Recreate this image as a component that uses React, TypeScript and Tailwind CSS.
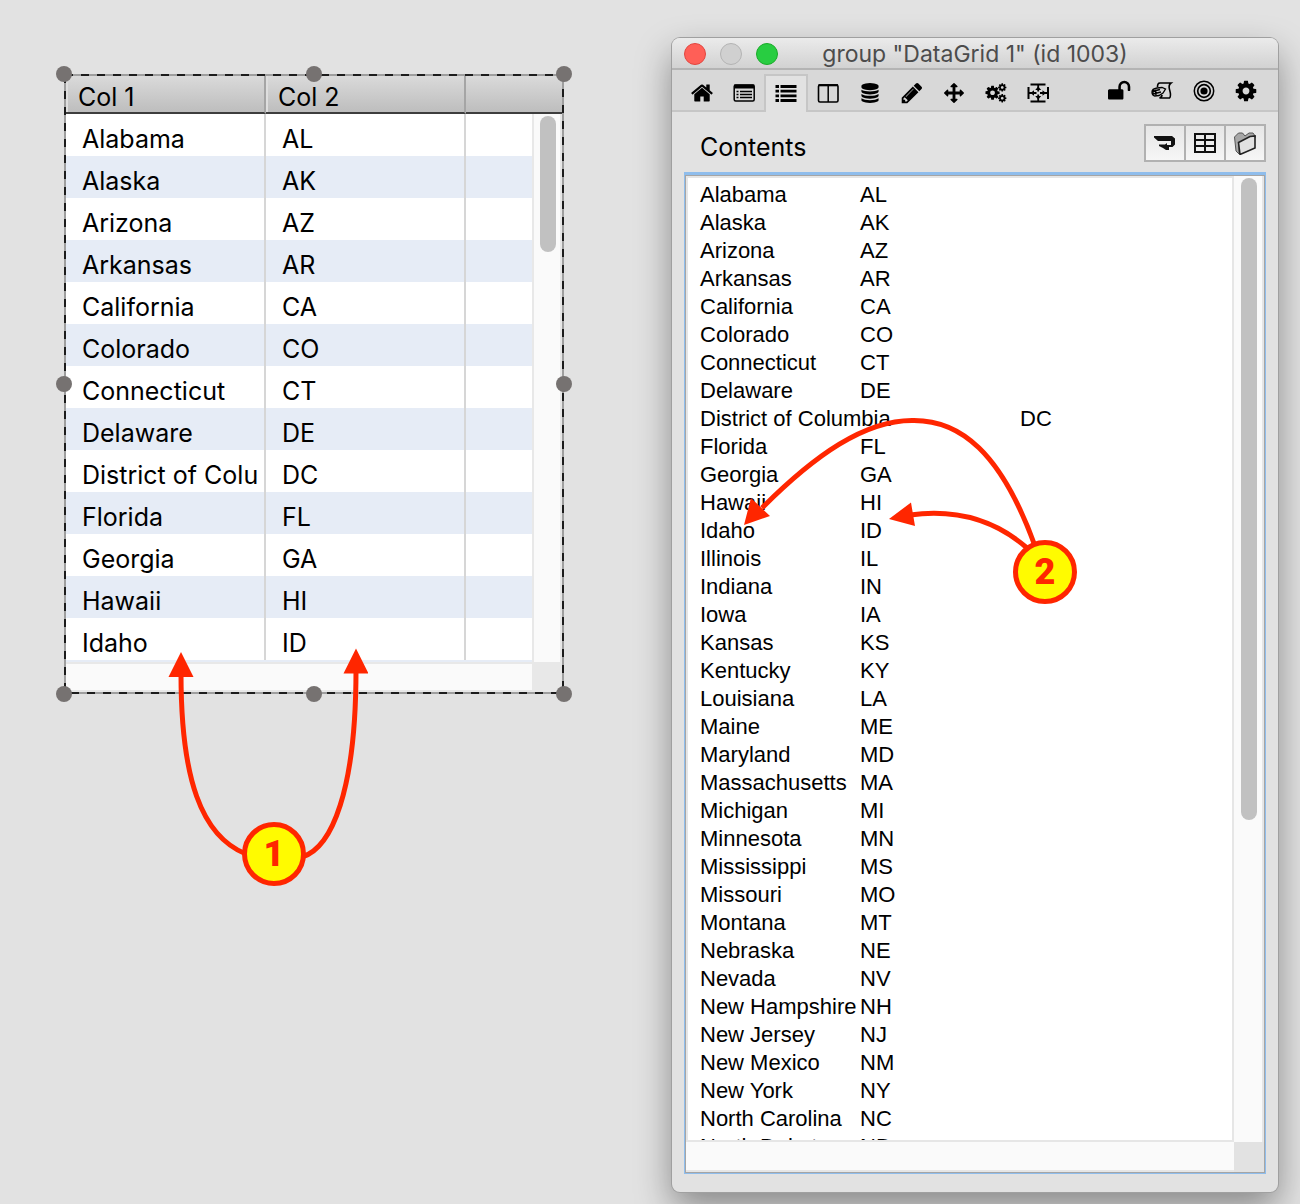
import React from 'react';

const contents: [string, string][] = [
  ['Alabama', 'AL'],
  ['Alaska', 'AK'],
  ['Arizona', 'AZ'],
  ['Arkansas', 'AR'],
  ['California', 'CA'],
  ['Colorado', 'CO'],
  ['Connecticut', 'CT'],
  ['Delaware', 'DE'],
  ['District of Columbia', 'DC'],
  ['Florida', 'FL'],
  ['Georgia', 'GA'],
  ['Hawaii', 'HI'],
  ['Idaho', 'ID'],
  ['Illinois', 'IL'],
  ['Indiana', 'IN'],
  ['Iowa', 'IA'],
  ['Kansas', 'KS'],
  ['Kentucky', 'KY'],
  ['Louisiana', 'LA'],
  ['Maine', 'ME'],
  ['Maryland', 'MD'],
  ['Massachusetts', 'MA'],
  ['Michigan', 'MI'],
  ['Minnesota', 'MN'],
  ['Mississippi', 'MS'],
  ['Missouri', 'MO'],
  ['Montana', 'MT'],
  ['Nebraska', 'NE'],
  ['Nevada', 'NV'],
  ['New Hampshire', 'NH'],
  ['New Jersey', 'NJ'],
  ['New Mexico', 'NM'],
  ['New York', 'NY'],
  ['North Carolina', 'NC'],
  ['North Dakota', 'ND'],
];

const GEAR =
  'M1152 896q0-106-75-181t-181-75-181 75-75 181 75 181 181 75 181-75 75-181zm512-109v222q0 12-8 23t-20 13l-185 28q-19 54-39 91 35 50 107 138 10 12 10 25t-9 23q-27 37-99 108t-94 71q-12 0-26-9l-138-108q-44 23-91 38-16 136-29 186-7 28-36 28h-222q-14 0-24.5-8.5t-11.5-21.5l-28-184q-49-16-90-37l-141 107q-10 9-25 9-14 0-25-11-126-114-165-168-7-10-7-23 0-12 8-23 15-21 51-66.5t54-70.5q-27-50-41-99l-183-27q-13-2-21-12.5t-8-23.5v-222q0-12 8-23t19-13l186-28q14-46 39-92-40-57-107-138-10-12-10-24 0-10 9-23 26-36 98.5-107.5t94.5-71.5q13 0 26 10l138 107q44-23 91-38 16-136 29-186 7-28 36-28h222q14 0 24.5 8.5t11.5 21.5l28 184q49 16 90 37l142-107q9-9 24-9 13 0 25 10 129 119 165 170 7 8 7 22 0 12-8 23-15 21-51 66.5t-54 70.5q26 50 41 98l183 28q13 2 21 12.5t8 23.5z';

const HOME =
  'M1472 992v480q0 26-19 45t-45 19h-384v-384h-256v384h-384q-26 0-45-19t-19-45v-480q0-1 .5-3t.5-3l575-474 575 474q1 2 1 6zm223-69l-62 74q-8 9-21 11h-3q-13 0-21-7l-692-577-692 577q-12 8-24 7-13-2-21-11l-62-74q-8-10-7-23.5t11-21.5l719-599q32-26 76-26t76 26l244 204v-195q0-14 9-23t23-9h192q14 0 23 9t9 23v408l219 182q10 8 11 21.5t-7 23.5z';

const PENCIL =
  'M491 1536l91-91-235-235-91 91v107h128v128h107zm523-928q0-22-22-22-10 0-17 7l-542 542q-7 7-7 17 0 22 22 22 10 0 17-7l542-542q7-7 7-17zm-54-192l416 416-832 832h-416v-416zm683 96q0 53-37 90l-166 166-416-416 166-165q36-38 90-38 53 0 91 38l235 234q37 39 37 91z';

const DATABASE =
  'M896 768q237 0 443-43t325-127v170q0 69-103 128t-280 93.5-385 34.5-385-34.5-280-93.5-103-128v-170q119 84 325 127t443 43zm0 768q237 0 443-43t325-127v170q0 69-103 128t-280 93.5-385 34.5-385-34.5-280-93.5-103-128v-170q119 84 325 127t443 43zm0-384q237 0 443-43t325-127v170q0 69-103 128t-280 93.5-385 34.5-385-34.5-280-93.5-103-128v-170q119 84 325 127t443 43zm0-1152q208 0 385 34.5t280 93.5 103 128v128q0 69-103 128t-280 93.5-385 34.5-385-34.5-280-93.5-103-128v-128q0-69 103-128t280-93.5 385-34.5z';

const ARROWS =
  'M1792 896q0 26-19 45l-256 256q-19 19-45 19t-45-19-19-45v-128h-384v384h128q26 0 45 19t19 45-19 45l-256 256q-19 19-45 19t-45-19l-256-256q-19-19-19-45t19-45 45-19h128v-384h-384v128q0 26-19 45t-45 19-45-19l-256-256q-19-19-19-45t19-45l256-256q19-19 45-19t45 19 19 45v128h384v-384h-128q-26 0-45-19t-19-45 19-45l256-256q19-19 45-19t45 19l256 256q19 19 19 45t-19 45-45 19h-128v384h384v-128q0-26 19-45t45-19 45 19l256 256q19 19 19 45z';

const UNLOCK =
  'M1664 576v256q0 26-19 45t-45 19h-64q-26 0-45-19t-19-45v-256q0-106-75-181t-181-75-181 75-75 181v192h96q40 0 68 28t28 68v576q0 40-28 68t-68 28h-960q-40 0-68-28t-28-68v-576q0-40 28-68t68-28h672v-192q0-185 131.5-316.5t316.5-131.5 316.5 131.5 131.5 316.5z';

function Glyph({ d, className = 'size-6' }: { d: string; className?: string }) {
  return (
    <svg viewBox="0 0 1792 1792" fill="currentColor" className={className} aria-hidden="true">
      <path d={d} />
    </svg>
  );
}

function Line({ children }: { children: React.ReactNode }) {
  return (
    <svg viewBox="0 0 24 24" fill="none" stroke="currentColor" className="size-6" aria-hidden="true">
      {children}
    </svg>
  );
}

const tabs: { label: string; icon: React.ReactNode }[] = [
  { label: 'Basic', icon: <Glyph d={HOME} /> },
  {
    label: 'Custom',
    icon: (
      <Line>
        <rect x="2.200" y="4" width="20" height="16" rx="1.500" strokeWidth="1.500" />
        <path d="M2.200 5.500h20" strokeWidth="4" />
        <path d="M8 10.500h12M8 13.500h12M8 16.500h12M4.500 10.500h2M4.500 13.500h2M4.500 16.500h2" strokeWidth="1.300" />
      </Line>
    ),
  },
  {
    label: 'Contents',
    icon: (
      <Line>
        <path d="M6.500 4.500h16M6.500 9.200h16M6.500 13.800h16M6.500 18.500h16M1.500 4.500h3.500M1.500 9.200h3.500M1.500 13.800h3.500M1.500 18.500h3.500" strokeWidth="2.800" />
      </Line>
    ),
  },
  {
    label: 'Columns',
    icon: (
      <Line>
        <rect x="2.500" y="4" width="19.500" height="17" rx="1.500" strokeWidth="1.600" />
        <path d="M2.500 4.200H22" strokeWidth="2.200" />
        <path d="M12.200 4v17" strokeWidth="1.500" />
      </Line>
    ),
  },
  { label: 'Data', icon: <Glyph d={DATABASE} className="size-5" /> },
  { label: 'Colors', icon: <Glyph d={PENCIL} /> },
  { label: 'Position', icon: <Glyph d={ARROWS} className="size-5" /> },
  {
    label: 'Advanced',
    icon: (
      <svg viewBox="0 0 24 24" fill="currentColor" className="size-6" aria-hidden="true">
        <path d={GEAR} transform="translate(0.300 3.500) scale(0.0092)" />
        <path d={GEAR} transform="translate(13.400 1.600) scale(0.0054)" />
        <path d={GEAR} transform="translate(13.400 12.400) scale(0.0054)" />
      </svg>
    ),
  },
  {
    label: 'Geometry',
    icon: (
      <Line>
        <path d="M4.500 3.500h15M4.500 20.500h15M2.500 6v12M22 6v12" strokeWidth="2" />
        <path d="M12.200 4v6.500M12.200 13.500V20M2.500 12h8M14 12h8" strokeWidth="1.800" />
        <path d="M9.200 9L12.200 5.500l3 3.500zM9.200 15l3 3.500 3-3.500zM8 9.200L4.500 12 8 14.800zM16.500 9.200L20 12l-3.500 2.800z" fill="currentColor" stroke="none" />
      </Line>
    ),
  },
];

const tools: { label: string; icon: React.ReactNode }[] = [
  { label: 'Lock', icon: <Glyph d={UNLOCK} /> },
  {
    label: 'Script',
    icon: (
      <Line>
        <path d="M7.500 8c0-2.500.500-4 2.500-4h11c-2 1.500-2.500 3-1.500 6.500s2 6.500 0 8.500H9.500c1.800-.600 2.500-1.500 2.500-3" strokeWidth="1.600" />
        <path d="M2 13c0-2 2-3.500 5-4l5-.500 3.500 1.500-2.500 4-4 2.500-4.500.500C3 16.500 2 15 2 13z" fill="#d8d8d8" strokeWidth="1.300" />
        <path d="M2 12.500l8-2M3 15l8-2M3 11v4.500M5.500 10.500L6 16" strokeWidth="1.400" />
      </Line>
    ),
  },
  {
    label: 'Target',
    icon: (
      <Line>
        <circle cx="12" cy="12" r="9.700" strokeWidth="1.500" />
        <circle cx="12" cy="12" r="6.300" strokeWidth="1.700" />
        <circle cx="12" cy="12" r="3.600" fill="currentColor" stroke="none" />
      </Line>
    ),
  },
  { label: 'Settings', icon: <Glyph d={GEAR} className="size-6" /> },
];

function Handle({ className }: { className: string }) {
  return <span className={`absolute size-4 rounded-full bg-[#767271] ${className}`} />;
}

function Badge({ n, className }: { n: number; className: string }) {
  return (
    <span
      className={`absolute flex size-16 items-center justify-center rounded-full border-[5px] border-[#ff2600] bg-[#fffb00] font-['Roboto',sans-serif] text-4xl font-black text-[#ff2600] ${className}`}
    >
      {n}
    </span>
  );
}

function DataGrid() {
  return (
    <section className="relative mt-9 h-[620px] min-w-0 flex-[500]" aria-label="DataGrid 1">
      <div className="flex h-full flex-col overflow-hidden bg-[#e8e8e8] p-0.5">
        <div className="relative h-[586px] overflow-hidden bg-[#e6ecf6]">
          <table className="w-full table-fixed border-separate border-spacing-0 text-left text-[25px] text-black">
            <colgroup>
              <col className="w-[200px]" />
              <col className="w-[200px]" />
              <col />
            </colgroup>
            <thead>
              <tr className="h-[38px] bg-linear-to-b from-[#dadada] to-[#bcbcbc]">
                <th className="border-r-2 border-b-2 border-r-[#a5a5a5] border-b-[#3d3d3d] p-0 pt-1.5 pl-3 leading-[30px] font-normal shadow-[inset_2px_0_0_#dedede]">
                  Col 1
                </th>
                <th className="border-r-2 border-b-2 border-r-[#a5a5a5] border-b-[#3d3d3d] p-0 pt-1.5 pl-3 leading-[30px] font-normal shadow-[inset_2px_0_0_#dedede]">
                  Col 2
                </th>
                <th className="border-b-2 border-[#3d3d3d] p-0" />
              </tr>
            </thead>
            <tbody>
              {contents.slice(0, 13).map(([name, code]) => (
                <tr key={name} className="h-[42px] odd:bg-white even:bg-[#e6ecf6]">
                  <td className="border-r-2 border-[#d6d6d6] p-0 pt-2 pr-1.5 pl-4">
                    <span className="block overflow-hidden leading-[34px] whitespace-nowrap">{name}</span>
                  </td>
                  <td className="border-r-2 border-[#d6d6d6] p-0 pt-2 pl-4 leading-[34px]">{code}</td>
                  <td className="p-0" />
                </tr>
              ))}
            </tbody>
          </table>
          <div className="absolute top-[38px] right-0 bottom-0 w-[30px] border-x-2 border-[#e8e8e8] bg-[#fafafa]">
            <div className="ml-1.5 mt-0.5 h-[136px] w-4 rounded-full bg-[#c1c1c1]" />
          </div>
        </div>
        <div className="mt-0.5 mr-[30px] h-[26px] bg-[#fafafa]" />
      </div>
      <span className="absolute inset-x-0 top-0 h-0.5 bg-[repeating-linear-gradient(90deg,#9e9e9e_0_1px,#1c1c1c_1px_9px,#9e9e9e_9px_16px)]" />
      <span className="absolute inset-x-0 bottom-0 h-0.5 bg-[repeating-linear-gradient(90deg,#9e9e9e_0_7px,#1c1c1c_7px_15px,#9e9e9e_15px_16px)]" />
      <span className="absolute inset-y-0 left-0 w-0.5 bg-[repeating-linear-gradient(180deg,#9e9e9e_0_1px,#1c1c1c_1px_9px,#9e9e9e_9px_16px)]" />
      <span className="absolute inset-y-0 right-0 w-0.5 bg-[repeating-linear-gradient(180deg,#1c1c1c_0_7px,#9e9e9e_7px_15px,#1c1c1c_15px_16px)]" />
      <Handle className="-top-2 -left-2" />
      <Handle className="-top-2 left-1/2 -translate-x-1/2" />
      <Handle className="-top-2 -right-2" />
      <Handle className="top-1/2 -left-2 -translate-y-1/2" />
      <Handle className="top-1/2 -right-2 -translate-y-1/2" />
      <Handle className="-bottom-2 -left-2" />
      <Handle className="-bottom-2 left-1/2 -translate-x-1/2" />
      <Handle className="-right-2 -bottom-2" />
      <svg viewBox="164 644 204 230" className="pointer-events-none absolute top-[570px] left-[100px] h-[230px] w-[204px]" aria-hidden="true">
        <g fill="none" stroke="#ff2600" strokeWidth="5">
          <path d="M181 674C181 778 201 836 246 854" />
          <path d="M356 670C356 790 332 848 302 857" />
        </g>
        <path d="M181 652l12.500 25h-25zM356 648.500l12.500 25h-25z" fill="#ff2600" />
      </svg>
      <Badge n={1} className="top-[748px] left-[178px]" />
    </section>
  );
}

function Inspector() {
  return (
    <section
      aria-label="Property inspector"
      className="relative flex min-w-0 flex-[606] flex-col rounded-lg bg-[#e2e2e2] shadow-[0_0_0_1px_#a0a0a0,0_16px_36px_rgba(0,0,0,0.4)]"
    >
      <header className="relative flex h-8 items-center rounded-t-lg border-b-2 border-[#b4b4b4] bg-linear-to-b from-[#ebebeb] to-[#d2d2d2] px-3 pt-0.5">
        <div className="flex gap-3.5">
          <button aria-label="Close" className="size-[22px] rounded-full border border-[#e2463f] bg-[#ff5f57]" />
          <button aria-label="Minimize" className="size-[22px] rounded-full border border-[#b4b4b4] bg-[#d0d0d0]" />
          <button aria-label="Zoom" className="size-[22px] rounded-full border border-[#1aab29] bg-[#28cd41]" />
        </div>
        <h1 className="pointer-events-none absolute inset-x-0 top-0 text-center text-[23px] leading-8 text-[#4c4c4c]">
          group "DataGrid 1" (id 1003)
        </h1>
      </header>
      <nav className="flex h-[42px] justify-between border-b-2 border-[#c6c6c6] bg-[#d8d8d8] pr-[11px] pl-[9px]">
        <div className="flex">
          {tabs.map((t) => (
            <button
              key={t.label}
              aria-label={t.label}
              className={
                t.label === 'Contents'
                  ? '-mx-px mt-1 -mb-0.5 flex w-11 items-center justify-center border-2 border-b-0 border-[#c6c6c6] bg-[#e2e2e2]'
                  : 'flex w-[42px] items-center justify-center pt-1.5'
              }
            >
              {t.icon}
            </button>
          ))}
        </div>
        <div className="flex">
          {tools.map((t) => (
            <button key={t.label} aria-label={t.label} className="flex w-[42px] items-center justify-center pt-0.5">
              {t.icon}
            </button>
          ))}
        </div>
      </nav>
      <div className="flex h-[60px] items-start justify-between pt-3 pr-3 pl-7">
        <label htmlFor="contents" className="pt-2 text-[25px] leading-[30px]">
          Contents
        </label>
        <div className="flex h-[38px] divide-x-2 divide-[#b1b1b1] border-2 border-[#b1b1b1] bg-linear-to-b from-[#e6e6e6] to-[#f6f6f6]">
          <button aria-label="Wrap lines" className="flex w-10 items-center justify-center">
            <Line>
              <path d="M1 5h18l3 2.500v6L19.500 16H16v3h-3l-3-2-4-2v-1.500h6l2-1.500v2h4v-4H5L1 6.500z" fill="#111" stroke="none" />
            </Line>
          </button>
          <button aria-label="Table view" className="flex w-10 items-center justify-center">
            <Line>
              <path d="M2 3h20v18H2zM2 9h20M2 15h20M12 3v18" stroke="#111" strokeWidth="2" />
            </Line>
          </button>
          <button aria-label="Open folder" className="flex w-[38px] items-center justify-center">
            <Line>
              <path d="M1.500 6l4-4h4l2.500 3 4-3h4l2.500 3.500-1 2L6 14v9l-3-3z" fill="#a8a8a8" stroke="#555" />
              <path d="M5.500 11.500L17 5.500l5-.500v12L7 23.500z" fill="#e2e2e2" stroke="#222" strokeWidth="1.600" />
            </Line>
          </button>
        </div>
      </div>
      <div className="mx-3 mb-[18px] flex flex-1 flex-col border border-t-[3px] border-[#8fbdec]">
        <div className="flex flex-1 flex-col border border-[#a5a5a5] bg-[#e2e2e2]">
          <div className="flex flex-1">
            <textarea
              id="contents"
              spellCheck={false}
              defaultValue={contents.map((r) => r.join('\t')).join('\n')}
              className="block min-w-0 flex-1 resize-none overflow-hidden border-2 border-[#e6e6e6] bg-white px-3 pt-[3px] font-['Liberation_Sans',Arial,sans-serif] text-[22px] leading-7 whitespace-pre text-black outline-none [tab-size:160px]"
            />
            <div className="w-[30px] border-r-2 border-[#e6e6e6] bg-[#fafafa] pt-0.5">
              <div className="ml-[7px] h-[642px] w-4 rounded-full bg-[#c1c1c1]" />
            </div>
          </div>
          <div className="mr-[30px] h-[30px] border-b-2 border-[#e6e6e6] bg-[#fafafa]" />
        </div>
      </div>
      <svg viewBox="736 410 310 150" className="pointer-events-none absolute top-[372px] left-16 h-[150px] w-[310px]" aria-hidden="true">
        <g fill="none" stroke="#ff2600" strokeWidth="5">
          <path d="M1035 546C1001 452 960 420 913 420.500C865 420 815 455 762 508" />
          <path d="M1027 548C995 520 955 509 910 515" />
        </g>
        <path d="M744 525L751 498L770 516zM889 519L911 502.500L915 526z" fill="#ff2600" />
      </svg>
      <Badge n={2} className="top-[502px] left-[341px]" />
    </section>
  );
}

export default function App() {
  return (
    <main className="flex min-h-screen gap-[108px] bg-[#e2e2e2] pt-[38px] pr-[22px] pb-3 pl-16 font-['Inter',sans-serif] text-black">
      <DataGrid />
      <Inspector />
    </main>
  );
}
